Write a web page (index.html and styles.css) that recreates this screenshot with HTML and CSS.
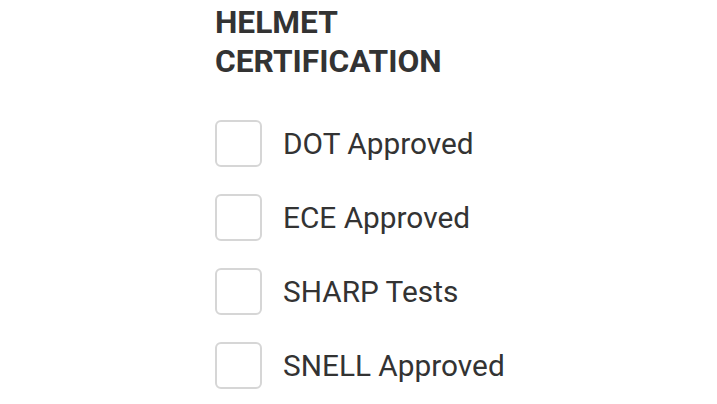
FILE: index.html
```html
<!DOCTYPE html>
<html lang="en">
<head>
    <meta charset="UTF-8">
    <meta name="viewport" content="width=device-width, initial-scale=1.0">
    <title>Helmet Certification</title>
    <link rel="stylesheet" href="styles.css">
</head>
<body>
    <div class="filter-group">
        <h3>Helmet<br>Certification</h3>
        <ul class="filter-list">
            <li>
                <label class="filter-option">
                    <input type="checkbox" name="cert" value="dot">
                    <span class="box"></span>
                    <span class="text">DOT Approved</span>
                </label>
            </li>
            <li>
                <label class="filter-option">
                    <input type="checkbox" name="cert" value="ece">
                    <span class="box"></span>
                    <span class="text">ECE Approved</span>
                </label>
            </li>
            <li>
                <label class="filter-option">
                    <input type="checkbox" name="cert" value="sharp">
                    <span class="box"></span>
                    <span class="text">SHARP Tests</span>
                </label>
            </li>
            <li>
                <label class="filter-option">
                    <input type="checkbox" name="cert" value="snell">
                    <span class="box"></span>
                    <span class="text">SNELL Approved</span>
                </label>
            </li>
        </ul>
    </div>
</body>
</html>
```

FILE: styles.css
```css
body {
    font-family: Roboto, "Liberation Sans", Arial, sans-serif;
    background-color: #fff;
    color: #333;
    margin: 0;
}

.filter-group {
    padding: 3px 0 0 215px;
}

h3 {
    margin: 0;
    font-size: 31.7px;
    line-height: 39px;
    font-weight: 700;
    text-transform: uppercase;
    color: #333;
}

.filter-list {
    list-style: none;
    margin: 39px 0 0;
    padding: 0;
    display: flex;
    flex-direction: column;
    gap: 27px;
}

.filter-option {
    display: flex;
    align-items: center;
    gap: 21px;
    cursor: pointer;
}

.filter-option input {
    display: none;
}

.box {
    width: 43px;
    height: 43px;
    border: 2px solid #d6d6d6;
    border-radius: 6px;
    background-color: #fff;
}

.filter-option input:checked + .box {
    border-color: #333;
    background-color: #333;
}

.text {
    font-size: 29.8px;
    line-height: 47px;
}
```
